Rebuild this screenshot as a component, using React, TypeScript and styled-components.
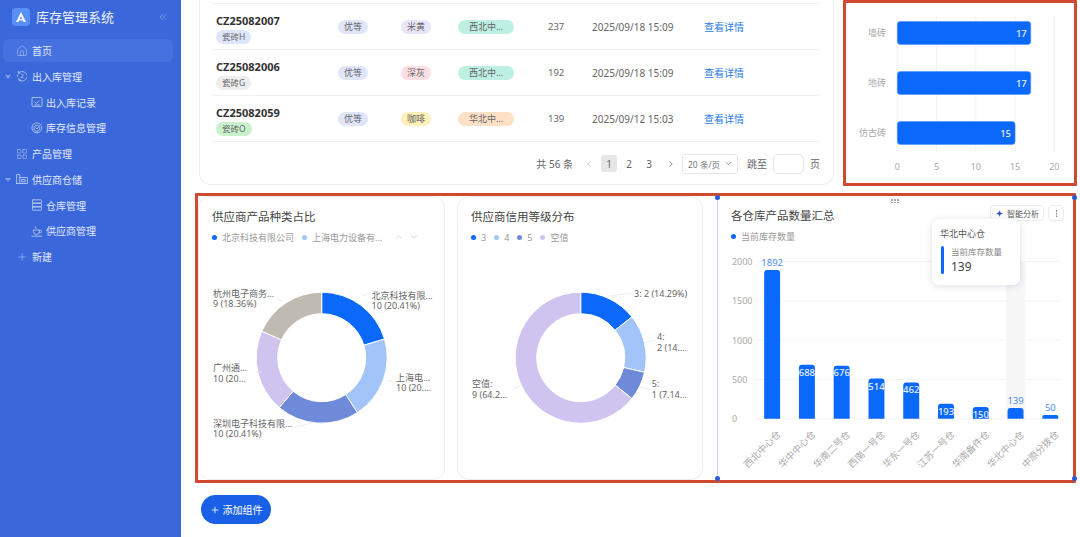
import React from "react";
import styled, { createGlobalStyle } from "styled-components";
import { ChevronDown, ChevronLeft, ChevronRight, ChevronUp, ChevronsLeft, House, LayoutGrid, Plus, Ellipsis } from "lucide-react";

const FONT = `"Noto Sans", "Noto Sans CJK SC", sans-serif`;

const Global = createGlobalStyle`
  html, body { margin: 0; padding: 0; background: #fff; overflow: hidden; }
  body { font-family: ${FONT}; color: #444; }
  * { box-sizing: border-box; }
`;

const Shell = styled.div`display: flex; width: 1080px; height: 537px; overflow: hidden;`;

/* ---------- sidebar ---------- */
const Sidebar = styled.aside`
  width: 181px; flex: none; background: #3a67da; color: #e9efff;
  padding: 8px 3px 0;
`;
const Brand = styled.div`display: flex; align-items: center; height: 18px; padding-left: 9px; margin-bottom: 14px;`;
const BrandLogo = styled.div`
  width: 18px; height: 18px; border-radius: 4px; background: #5a90f6;
  display: flex; align-items: center; justify-content: center;
`;
const BrandName = styled.div`margin-left: 6px; font-size: 13px; line-height: 18px; color: #eef3ff; flex: 1;`;
const Collapse = styled.div`display: flex; margin-right: 9px; color: #a9c0f4;`;
const Menu = styled.nav`display: flex; flex-direction: column; margin-top: -1px;`;
const Item = styled.div<{ $sub?: boolean; $active?: boolean }>`
  height: ${p => (p.$active ? 23 : 25.75)}px;
  margin-bottom: ${p => (p.$active ? 1.5 : 0)}px;
  width: 170px; position: relative;
  display: flex; align-items: center; gap: ${p => (p.$sub ? 3 : 4)}px;
  padding-left: ${p => (p.$sub ? 28 : 13)}px;
  font-size: 10px; color: #e4ebff;
  border-radius: 6px;
  background: ${p => (p.$active ? "#4672e0" : "transparent")};
`;
const Caret = styled.span`
  position: absolute; left: 2px; top: 11px; width: 0; height: 0;
  border-left: 3px solid transparent; border-right: 3px solid transparent;
  border-top: 4px solid #7f9ee8;
`;
const IconBox = styled.span`width: 12px; height: 12px; display: flex; flex: none; color: #c3d3f8;`;

/* ---------- main ---------- */
const Main = styled.main`flex: 1; display: flex; flex-direction: column; min-width: 0; background: #fff;`;
const TopRow = styled.div`display: flex; align-items: flex-start; gap: 9px; padding-left: 18px; height: 186px;`;
const TableCard = styled.section`
  width: 635px; height: 185px; padding: 3px 13px 0 12px;
  border: 1px solid #eceef2; border-top: none;
  border-radius: 0 0 12px 12px;
`;
const Row = styled.div`
  display: grid; grid-template-columns: 122px 63px 57px 90px 44px 112px 1fr;
  height: 46px; align-items: center; padding-left: 4px;
  border-top: 1px solid #eef0f3; font-size: 9.5px; color: #666;
`;
const RowEnd = styled.div`border-top: 1px solid #eef0f3;`;
const IdCell = styled.div`display: flex; flex-direction: column; align-items: flex-start; gap: 2px; padding-top: 4px;`;
const Code = styled.div`font-size: 11px; font-weight: 700; color: #333; line-height: 14px;`;
const Chip = styled.span<{ $bg: string; $w?: number }>`
  display: inline-flex; align-items: center; justify-content: center;
  height: 14px; width: ${p => (p.$w ? `${p.$w}px` : "30px")};
  background: ${p => p.$bg}; color: #666; font-size: 9px; border-radius: 7px; line-height: 14px;
`;
const MiniChip = styled(Chip)`width: auto; padding: 0 6px; font-size: 8.5px;`;
const ValueText = styled.span`color: #666;`;
const DateText = styled.span`color: #666; font-size: 10px;`;
const LinkText = styled.span`color: #2a7be8; font-size: 10px;`;

const Pager = styled.div`
  display: flex; align-items: center; justify-content: flex-end; height: 43px; font-size: 10px; color: #666;
`;
const PagerIcon = styled.span<{ $dim?: boolean }>`display: flex; color: ${p => (p.$dim ? "#bbb" : "#777")};`;
const PagerSpace = styled.span<{ $w: number }>`width: ${p => p.$w}px;`;
const PageNum = styled.span<{ $on?: boolean }>`
  width: 16px; height: 17px; margin: 0 2px; display: flex; align-items: center; justify-content: center;
  border-radius: 3px; background: ${p => (p.$on ? "#e6e6e6" : "transparent")};
`;
const PageSize = styled.div`
  width: 56px; height: 20px; margin-left: 6px; display: flex; align-items: center; justify-content: space-between;
  padding: 0 4px 0 5px; border: 1px solid #e4e4e4; border-radius: 4px; font-size: 8.5px; color: #777;
`;
const JumpInput = styled.div`width: 31px; height: 20px; margin: 0 6px 0 6px; border: 1px solid #e4e4e4; border-radius: 5px;`;
const Total = styled.span`margin-right: 11px;`;
const JumpLabel = styled.span`margin-left: 9px;`;

const Outline = styled.div`border: 3px solid #cf4a30;`;
const BarWrap = styled(Outline)`width: 234px; height: 186px; border-radius: 1px;`;
const BottomWrap = styled(Outline)`
  width: 881px; height: 290px; margin: 7px 0 0 14px; display: flex; gap: 12px; border-radius: 1px;
`;
const Card = styled.section<{ $w: number }>`
  position: relative; flex: none; width: ${p => p.$w}px; height: 284px;
  border: 1px solid #eceef2; border-radius: 12px; display: flex; flex-direction: column;
`;
const SelectedCard = styled(Card)`
  margin-left: 2px; border: none; border-left: 1px solid #c5d4fb; border-radius: 0;
`;
const Head = styled.div`height: 50px; padding: 12px 0 0 13px; flex: none;`;
const Title = styled.div`font-size: 11.5px; line-height: 16px; color: #444;`;
const Legend = styled.div`display: flex; align-items: center; gap: 8px; margin-top: 5px; height: 14px; font-size: 9px; color: #999;`;
const LegendItem = styled.span`display: inline-flex; align-items: center; gap: 5px;`;
const Dot = styled.i<{ $c: string }>`width: 5px; height: 5px; border-radius: 50%; background: ${p => p.$c};`;
const Arrows = styled.span`display: flex; gap: 5px; margin-left: 4px; color: #999;`;
const Plot = styled.svg`display: block; flex: 1; min-height: 0; width: 100%;`;
const Label = styled.text`font-family: ${FONT}; font-size: 9px; fill: #666;`;
const AxisText = styled.text`font-family: ${FONT}; font-size: 9px; fill: #aaa;`;
const SlantText = styled(AxisText)`font-size: 9.5px;`;
const BarValue = styled.text<{ $in?: boolean }>`
  font-family: ${FONT}; font-size: 9.5px; font-weight: ${p => (p.$in ? 500 : 400)};
  fill: ${p => (p.$in ? "#e8f1ff" : "#4d8ff0")};
`;

const Handle = styled.span<{ $x: "l" | "r"; $y: "t" | "b" }>`
  position: absolute; width: 5px; height: 5px; border-radius: 50%; background: #2a5ad8;
  ${p => (p.$x === "l" ? "left: -3px;" : "right: -4px;")}
  ${p => (p.$y === "t" ? "top: -1px;" : "bottom: -1px;")}
`;
const Grip = styled.span`
  position: absolute; top: 3px; left: 173px; display: grid; grid-template-columns: repeat(3, 2px); gap: 1px;
  i { width: 1.5px; height: 1.5px; background: #aaa; }
`;
const Tools = styled.div`position: absolute; right: 9px; top: 9px; display: flex; gap: 4px;`;
const ToolBtn = styled.div`
  height: 16px; width: 54px; display: flex; align-items: center; gap: 4px; padding: 0 0 0 5px; background: #fff;
  border: 1px solid #ececec; border-radius: 4px; font-size: 8px; color: #555;
`;
const IconBtn = styled(ToolBtn)`width: 16px; padding: 0; justify-content: center; color: #777;`;
const Tip = styled.div`
  position: absolute; left: 214px; top: 23px; width: 88px; height: 66px; padding: 8px 8px;
  background: #fff; border-radius: 7px; box-shadow: 0 1px 7px rgba(40, 50, 80, .16);
`;
const TipTitle = styled.div`font-size: 9px; line-height: 14px; color: #555;`;
const TipBody = styled.div`display: flex; gap: 7px; margin-top: 5px;`;
const TipBar = styled.i`width: 3px; height: 28px; border-radius: 2px; background: #0a68fa; margin-left: 1px;`;
const TipLabel = styled.div`font-size: 8.5px; line-height: 12px; color: #888;`;
const TipValue = styled.div`font-size: 12px; line-height: 17px; color: #444;`;

const AddBtn = styled.button`
  display: inline-flex; align-items: center; justify-content: center; gap: 3px;
  width: 70px; height: 29px; margin: 12px 0 0 20px; border: none; border-radius: 15px;
  background: #1a60e6; color: #fff; font: 10px ${FONT}; padding: 0;
`;

/* ---------- icons ---------- */
const S: React.FC<{ children: React.ReactNode }> = ({ children }) => (
  <svg width="12" height="12" viewBox="0 0 12 12" fill="none" stroke="currentColor" strokeWidth=".8" strokeLinecap="round" strokeLinejoin="round">{children}</svg>
);
const CycleIcon = () => <S><path d="M2.5 3A4.8 4.8 0 0 1 10.6 4.5M10.8 7.6A4.8 4.8 0 0 1 3 10M1.4 6.4A4.8 4.8 0 0 1 1.6 5" /><path d="M2.4 1.4V3H4M3 8.6V10.2H4.6" /><text x="6" y="8" fontSize="5.5" textAnchor="middle" fill="currentColor" stroke="none">2</text></S>;
const CheckBoxIcon = () => <S><rect x="1" y="1.5" width="10" height="9" rx="1" /><path d="M4 6.2 5.4 7.5 8 4.8M3.6 9H8.4" /></S>;
const RadarIcon = () => <S><path d="M8.6 1.6A5 5 0 1 0 10.7 4.4" /><path d="M7.3 3.6A3 3 0 1 0 8.8 5.6" /><path d="M4.6 5.6 6 7 10.2 2" /></S>;
const StoreIcon = () => <S><path d="M.6 10.5V1.5H3.8V10.5M3.8 4.5H11.4V10.500H.6" /><path d="M6 6.5H9.2V8.8H6Z" /></S>;
const StackIcon = () => <S><rect x="1.5" y=".8" width="9" height="3.2" rx=".6" /><rect x="1.5" y="4.4" width="9" height="3.2" rx=".6" /><rect x="1.5" y="8" width="9" height="3.2" rx=".6" /></S>;
const CupIcon = () => <S><path d="M.8 11.200H10.800M2.500 5H8.400V7A2.600 2.600 0 0 1 5.800 9.400H5.100A2.600 2.600 0 0 1 2.500 7ZM8.400 5.400H9.400A1 1 0 0 1 9.400 7.600H8.300M4.200 1.600 5 3.400" /></S>;

/* ---------- data ---------- */
const menu = [
  { t: "首页", icon: <House size={12} strokeWidth={1} />, active: true },
  { t: "出入库管理", icon: <CycleIcon />, caret: true },
  { t: "出入库记录", icon: <CheckBoxIcon />, sub: true },
  { t: "库存信息管理", icon: <RadarIcon />, sub: true },
  { t: "产品管理", icon: <LayoutGrid size={12} strokeWidth={1} /> },
  { t: "供应商仓储", icon: <StoreIcon />, caret: true },
  { t: "仓库管理", icon: <StackIcon />, sub: true },
  { t: "供应商管理", icon: <CupIcon />, sub: true },
  { t: "新建", icon: <Plus size={12} strokeWidth={1} /> },
];
const rows = [
  { id: "CZ25082007", mat: "瓷砖H", matBg: "#dfe5fb", color: "米黄", colorBg: "#e9e5f9", wh: "西北中...", whBg: "#bdf0e2", n: 237, d: "2025/09/18 15:09" },
  { id: "CZ25082006", mat: "瓷砖G", matBg: "#eeeeee", color: "深灰", colorBg: "#fbdfe4", wh: "西北中...", whBg: "#bdf0e2", n: 192, d: "2025/09/18 15:09" },
  { id: "CZ25082059", mat: "瓷砖O", matBg: "#c9f2cc", color: "咖啡", colorBg: "#fdf0b8", wh: "华北中...", whBg: "#fde0c6", n: 139, d: "2025/09/12 15:03" },
];
const C = ["#0a68fa", "#a3c4f8", "#6f8ad9", "#cfc3f0", "#bfbab2"];

const arc = (cx: number, cy: number, R: number, r: number, a0: number, a1: number) => {
  const p = (rad: number, a: number) => [cx + rad * Math.sin(a), cy - rad * Math.cos(a)].map(v => v.toFixed(2)).join(" ");
  const large = a1 - a0 > Math.PI ? 1 : 0;
  return `M${p(R, a0)}A${R} ${R} 0 ${large} 1 ${p(R, a1)}L${p(r, a1)}A${r} ${r} 0 ${large} 0 ${p(r, a0)}Z`;
};
const Donut: React.FC<{ cx: number; cy: number; parts: { v: number; c: string }[] }> = ({ cx, cy, parts }) => {
  const sum = parts.reduce((s, p) => s + p.v, 0);
  let a = 0;
  return (
    <>
      {parts.map((p, i) => {
        const a0 = a;
        a += (p.v / sum) * Math.PI * 2;
        return <path key={i} d={arc(cx, cy, 65.5, 44, a0, a)} fill={p.c} stroke="#fff" strokeWidth="1" />;
      })}
    </>
  );
};
const Lead: React.FC<{ d: string }> = ({ d }) => <path d={d} fill="none" stroke="#e6e6e6" strokeWidth=".7" />;

const wh = [
  ["西北中心仓", 1892], ["华中中心仓", 688], ["华南二号仓", 676], ["西南一号仓", 514], ["华东一号仓", 462],
  ["江苏一号仓", 193], ["华南备件仓", 150], ["华北中心仓", 139], ["中原分拨仓", 50],
] as const;
const barIn: Record<number, number> = { 688: 376, 676: 376.5, 514: 390, 462: 393.5, 193: 415.5, 150: 418.5 };

export default function App() {
  return (
    <Shell>
      <Global />
      <Sidebar>
        <Brand>
          <BrandLogo>
            <svg width="12" height="12" viewBox="0 0 12 12"><path d="M6 1 1 11H3.4L6 5.4 8.6 11H11ZM4.4 8.2H7.6V9.6H4.4Z" fill="#fff" /></svg>
          </BrandLogo>
          <BrandName>库存管理系统</BrandName>
          <Collapse><ChevronsLeft size={12} strokeWidth={1.1} /></Collapse>
        </Brand>
        <Menu>
          {menu.map(m => (
            <Item key={m.t} $sub={m.sub} $active={m.active}>
              {m.caret && <Caret />}
              <IconBox>{m.icon}</IconBox>
              {m.t}
            </Item>
          ))}
        </Menu>
      </Sidebar>
      <Main>
        <TopRow>
          <TableCard>
            {rows.map(r => (
              <Row key={r.id}>
                <IdCell>
                  <Code>{r.id}</Code>
                  <MiniChip $bg={r.matBg}>{r.mat}</MiniChip>
                </IdCell>
                <div><Chip $bg="#e0e5fa">优等</Chip></div>
                <div><Chip $bg={r.colorBg}>{r.color}</Chip></div>
                <div><Chip $bg={r.whBg} $w={56}>{r.wh}</Chip></div>
                <ValueText>{r.n}</ValueText>
                <DateText>{r.d}</DateText>
                <LinkText>查看详情</LinkText>
              </Row>
            ))}
            <RowEnd />
            <Pager>
              <Total>共 56 条</Total>
              <PagerIcon $dim><ChevronLeft size={10} /></PagerIcon>
              <PagerSpace $w={5} />
              <PageNum $on>1</PageNum>
              <PageNum>2</PageNum>
              <PageNum>3</PageNum>
              <PagerSpace $w={7} />
              <PagerIcon><ChevronRight size={10} /></PagerIcon>
              <PageSize>20 条/页<ChevronDown size={9} /></PageSize>
              <JumpLabel>跳至</JumpLabel>
              <JumpInput />
              <span>页</span>
            </Pager>
          </TableCard>
          <BarWrap>
            <Plot viewBox="846 3 228 180">
              {[0, 5, 10, 15, 20].map(v => (
                <g key={v}>
                  <line x1={897.3 + v * 7.85} x2={897.3 + v * 7.85} y1="15" y2="152" stroke="#eeeff2" strokeWidth=".8" />
                  <AxisText x={897.3 + v * 7.85} y="170" textAnchor="middle">{v}</AxisText>
                </g>
              ))}
              {([["墙砖", 17, 21.5], ["地砖", 17, 71.5], ["仿古砖", 15, 121.5]] as const).map(([t, v, y]) => (
                <g key={t}>
                  <AxisText x="886" y={y + 14.5} textAnchor="end">{t}</AxisText>
                  <rect x="897.3" y={y} width={v * 7.85} height="23" rx="3" fill="#0a68fa" stroke="#4d94fb" strokeWidth=".6" />
                  <BarValue $in x={897.3 + v * 7.85 - 4} y={y + 15} textAnchor="end">{v}</BarValue>
                </g>
              ))}
            </Plot>
          </BarWrap>
        </TopRow>
        <BottomWrap>
          <Card $w={247}>
            <Head>
              <Title>供应商产品种类占比</Title>
              <Legend>
                <LegendItem><Dot $c={C[0]} />北京科技有限公司</LegendItem>
                <LegendItem><Dot $c={C[1]} />上海电力设备有...</LegendItem>
                <Arrows><ChevronUp size={10} strokeWidth={1} /><ChevronDown size={10} strokeWidth={1} /></Arrows>
              </Legend>
            </Head>
            <Plot viewBox="199 247 245 232">
              <Donut cx={321.7} cy={357.7} parts={[{ v: 20.41, c: C[0] }, { v: 20.41, c: C[1] }, { v: 20.41, c: C[2] }, { v: 20.41, c: C[3] }, { v: 18.36, c: C[4] }]} />
              <Lead d="M276 298 283 302" /><Lead d="M362 296 368 294" /><Lead d="M388 381 394 381" /><Lead d="M255 372 262 372" /><Lead d="M292 428 310 423" />
              <Label x="213" y="296.5">杭州电子商务...</Label><Label x="213" y="306.5">9 (18.36%)</Label>
              <Label x="371.5" y="299">北京科技有限...</Label><Label x="371.5" y="309">10 (20.41%)</Label>
              <Label x="213" y="371">广州通...</Label><Label x="213" y="382">10 (20...</Label>
              <Label x="396" y="381">上海电...</Label><Label x="396" y="391">10 (20....</Label>
              <Label x="213" y="427">深圳电子科技有限...</Label><Label x="213" y="437">10 (20.41%)</Label>
            </Plot>
          </Card>
          <Card $w={246}>
            <Head>
              <Title>供应商信用等级分布</Title>
              <Legend>
                <LegendItem><Dot $c={C[0]} />3</LegendItem>
                <LegendItem><Dot $c={C[1]} />4</LegendItem>
                <LegendItem><Dot $c={C[2]} />5</LegendItem>
                <LegendItem><Dot $c={C[3]} />空值</LegendItem>
              </Legend>
            </Head>
            <Plot viewBox="458 247 244 232">
              <Donut cx={580.7} cy={357.7} parts={[{ v: 2, c: C[0] }, { v: 2, c: C[1] }, { v: 1, c: C[2] }, { v: 9, c: C[3] }]} />
              <Lead d="M610 296 632 293" /><Lead d="M645 343 655 340" /><Lead d="M640 387 650 390" /><Lead d="M514 389 520 386" />
              <Label x="634" y="297">3: 2 (14.29%)</Label>
              <Label x="657" y="340">4:</Label><Label x="657" y="351">2 (14....</Label>
              <Label x="651.7" y="387">5:</Label><Label x="651.7" y="397.5">1 (7.14...</Label>
              <Label x="472" y="387">空值:</Label><Label x="472" y="397.5">9 (64.2...</Label>
            </Plot>
          </Card>
          <SelectedCard $w={356}>
            <Handle $x="l" $y="t" /><Handle $x="l" $y="b" /><Handle $x="r" $y="t" /><Handle $x="r" $y="b" />
            <Grip>{Array.from({ length: 6 }, (_, i) => <i key={i} />)}</Grip>
            <Head>
              <Title>各仓库产品数量汇总</Title>
              <Legend>
                <LegendItem><Dot $c={C[0]} />当前库存数量</LegendItem>
              </Legend>
            </Head>
            <Plot viewBox="718 246 356 234">
              {[2000, 1500, 1000, 500, 0].map(v => {
                const y = 419 - (v * 39.45) / 500;
                return (
                  <g key={v}>
                    <line x1="757" x2="1060" y1={y} y2={y} stroke="#eff0f3" strokeWidth=".8" />
                    <AxisText x="732" y={y + 3.5}>{v}</AxisText>
                  </g>
                );
              })}
              <rect x="1006.7" y="261" width="19.5" height="158" fill="#f7f7f8" />
              {wh.map(([name, v], i) => {
                const x = 772.3 + i * 34.87;
                const h = (v * 39.45) / 500;
                const r = Math.min(3, h / 2);
                return (
                  <g key={name}>
                    <path d={`M${x - 8} 419V${419 - h + r}q0 -${r} ${r} -${r}H${x + 8 - r}q${r} 0 ${r} ${r}V419Z`} fill="#0a68fa" />
                    {barIn[v] ? (
                      <BarValue $in x={x} y={barIn[v]} textAnchor="middle">{v}</BarValue>
                    ) : (
                      <BarValue x={x} y={419 - h - 4} textAnchor="middle">{v}</BarValue>
                    )}
                    <SlantText x={x + 7} y="436" textAnchor="end" transform={`rotate(-45 ${x + 7} 433)`}>{name}</SlantText>
                  </g>
                );
              })}
            </Plot>
            <Tools>
              <ToolBtn>
                <svg width="7" height="7" viewBox="0 0 10 10"><path d="M5 0C5.500 3 7 4.500 10 5 7 5.500 5.500 7 5 10 4.500 7 3 5.500 0 5 3 4.500 4.500 3 5 0Z" fill="#3b4fd8" /></svg>
                智能分析
              </ToolBtn>
              <IconBtn><Ellipsis size={9} style={{ transform: "rotate(90deg)" }} /></IconBtn>
            </Tools>
            <Tip>
              <TipTitle>华北中心仓</TipTitle>
              <TipBody>
                <TipBar />
                <div>
                  <TipLabel>当前库存数量</TipLabel>
                  <TipValue>139</TipValue>
                </div>
              </TipBody>
            </Tip>
          </SelectedCard>
        </BottomWrap>
        <div>
          <AddBtn><Plus size={10} />添加组件</AddBtn>
        </div>
      </Main>
    </Shell>
  );
}
